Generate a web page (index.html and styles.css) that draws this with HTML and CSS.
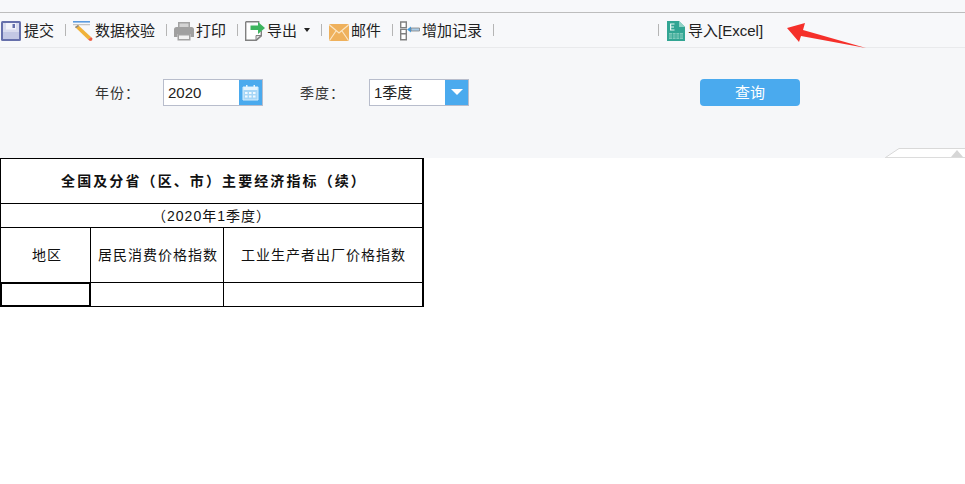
FILE: index.html
```html
<!DOCTYPE html>
<html lang="zh">
<head>
<meta charset="utf-8">
<title>主要经济指标</title>
<link rel="stylesheet" href="styles.css">
</head>
<body>
<div class="top-strip"></div>
<div class="toolbar">
  <div class="tool tool-first">
    <svg class="icon" viewBox="0 0 20 20"><rect x="0" y="0" width="20" height="20" rx="1.500" fill="#6670ab"/><path d="M2 2h16v16H2z" fill="#d9dcee"/><path d="M5 2h10v6.500H5z" fill="#f2f3fa"/><path d="M11.500 3h2.500v4h-2.500z" fill="#6670ab"/><path d="M2 11h16v7H2z" fill="#c3c8e4"/></svg>
    <span>提交</span>
  </div>
  <i class="sep"></i>
  <div class="tool">
    <svg class="icon" viewBox="0 0 20 20"><path d="M0 0h17v1.600H0z" fill="#5a9be0"/><path d="M0 3.200h17v1H0z" fill="#b5b5b5"/><path d="M2 6l3-2 13 12-3 2.500z" fill="#f0b23a"/><path d="M2 6l3-2 1 1-3 2.200z" fill="#8a8a8a"/><path d="M15 18.500l3-2.500 1.500 1.500-.5 2-2 .5z" fill="#ee5f45"/></svg>
    <span>数据校验</span>
  </div>
  <i class="sep"></i>
  <div class="tool">
    <svg class="icon" viewBox="0 0 20 20"><path d="M4 1h12v6H4z" fill="#a3a3a3"/><path d="M5.500 2.500h9V6h-9z" fill="#d4d4d4"/><path d="M0 8.500q0-2.500 2.500-2.500h15Q20 6 20 8.500V16h-3.500v-3h-13v3H0z" fill="#a0a0a0"/><path d="M3.500 13h13v6.500h-13z" fill="#a3a3a3"/><path d="M5 14.500h10v3.500H5z" fill="#f2f2f2"/></svg>
    <span>打印</span>
  </div>
  <i class="sep"></i>
  <div class="tool">
    <svg class="icon" viewBox="0 0 20 20"><path d="M.7.700h13v3M16.300 10v5l-5 4.300H.7V.7" fill="#fff" stroke="#808080" stroke-width="1.400"/><path d="M16 14.500h-5v4.500z" fill="#dedede" stroke="#808080"/><path d="M5.500 4.500h7.500V1L20 7l-7 6V9H5.500z" fill="#3db45e"/></svg>
    <span>导出</span>
    <svg class="caret" viewBox="0 0 6 4"><path d="M0 0h6L3 4z" fill="#222"/></svg>
  </div>
  <i class="sep"></i>
  <div class="tool">
    <svg class="icon" viewBox="0 0 20 20"><rect x="0" y="3" width="20" height="17" rx="1.500" fill="#efb15c"/><path d="M.5 4L10 12l9.500-8M.5 19.500L7 10M19.500 19.500L13 10" fill="none" stroke="#fbe6c5" stroke-width="1.200"/></svg>
    <span>邮件</span>
  </div>
  <i class="sep"></i>
  <div class="tool">
    <svg class="icon" viewBox="0 0 20 20"><path d="M.7 1h5.600v5.600H.7zM.7 8.400h5.600v4.400H.7zM.7 12.800h5.600v6H.7z" fill="#fff" stroke="#808080" stroke-width="1.400"/><path d="M7 8.500l4-3v6z" fill="#3f9be0"/><path d="M11 7h8.500v3H11z" fill="#a9cbe6" stroke="#808080" stroke-width=".8"/></svg>
    <span>增加记录</span>
  </div>
  <i class="sep"></i>
  <i class="sep sep-far"></i>
  <div class="tool">
    <svg class="icon" viewBox="0 0 20 20"><path d="M1 0h12l6 6v14H1z" fill="#32a593"/><path d="M13 0l6 6h-6z" fill="#8fd3c6"/><path d="M4 2.500h4.500v1H5.200v2H8v1H5.200v2h3.300v1H4z" fill="#e8f7f3"/><path d="M3 12h14v6H3z" fill="#7fcbbb"/><path d="M6.500 12v6M10 12v6M13.500 12v6M3 14h14M3 16h14" stroke="#32a593" stroke-width=".7"/></svg>
    <span>导入[Excel]</span>
  </div>
</div>
<form class="filter">
  <label class="field-label">年份：</label>
  <div class="combo">
    <span class="combo-value">2020</span>
    <span class="combo-btn">
      <svg class="cal" viewBox="0 0 17 17"><path d="M1 3h15v13H1z" fill="#a6d6f7" stroke="#d5edfc"/><path d="M1.500 3h14v3h-14z" fill="#e4f4fe"/><path d="M4 1h1.500v3H4zM11.500 1H13v3h-1.500z" fill="#e4f4fe"/><path d="M3 8h2.500v2H3zM7 8h2.500v2H7zM11 8h2.500v2H11zM3 11.500h2.500v2H3zM7 11.500h2.500v2H7zM11 11.500h2.500v2H11z" fill="#f1f9ff"/></svg>
    </span>
  </div>
  <label class="field-label field-label-second">季度：</label>
  <div class="combo">
    <span class="combo-value">1季度</span>
    <span class="combo-btn">
      <svg class="down" viewBox="0 0 12 6"><path d="M0 0h12L6 6z" fill="#fff"/></svg>
    </span>
  </div>
  <button type="button" class="query">查询</button>
  <svg class="collapse" viewBox="0 0 80 10"><path d="M0 9.500L14 .5h66v9z" fill="#fff"/><path d="M.5 9.500L14 .5h66" fill="none" stroke="#d9d9d9"/><path d="M0 9h80v1H0z" fill="#dcdcdc"/><path d="M66 9l6-7 6 7z" fill="#d6d6d6"/></svg>
</form>
<table class="report">
  <colgroup><col class="col-a"><col class="col-b"><col class="col-c"></colgroup>
  <tr class="row-title"><td colspan="3" class="title">全国及分省（区、市）主要经济指标（续）</td></tr>
  <tr class="row-sub"><td colspan="3">（2020年1季度）</td></tr>
  <tr class="row-head"><td class="head-first">地区</td><td class="head-mid">居民消费价格指数</td><td class="head-last">工业生产者出厂价格指数</td></tr>
  <tr class="row-data"><td class="selected"></td><td></td><td></td></tr>
</table>
<svg class="arrow" viewBox="0 0 85 30"><path d="M1 5L19 0l-2 7 63 18-65-12-2 6z" fill="#f5302a"/></svg>
</body>
</html>
```
FILE: styles.css
```css
html, body {
  margin: 0;
  padding: 0;
  background: #fff;
}
body {
  position: relative;
  width: 965px;
  height: 484px;
  overflow: hidden;
  font-family: "Liberation Sans", "Noto Sans CJK SC", sans-serif;
  font-size: 15px;
  color: #222;
}
.top-strip {
  height: 12px;
  background: #f7f8fa;
  border-bottom: 1px solid #bdbdbd;
}
.toolbar {
  height: 34px;
  display: flex;
  align-items: center;
  padding-left: 1px;
  background: #f7f8fa;
  border-bottom: 1px solid #e9eaec;
}
.tool {
  display: flex;
  align-items: center;
  gap: 2px;
  height: 20px;
  line-height: 20px;
  white-space: nowrap;
}
.tool-first {
  gap: 3px;
}
.tool span {
  display: block;
  margin-top: 2px;
}
.icon {
  width: 20px;
  height: 20px;
  flex: none;
  margin-top: 2px;
}
.caret {
  width: 6px;
  height: 4px;
  margin-left: 5px;
}
.sep {
  display: block;
  flex: none;
  width: 1px;
  height: 12px;
  margin: 0 7px 0 11px;
  background: #b5b5b5;
}
.sep-far {
  margin-left: 157px;
}
.filter {
  position: relative;
  display: flex;
  align-items: center;
  height: 110px;
  padding: 0 0 22px 95px;
  box-sizing: border-box;
  background: #f6f7f9;
}
.field-label {
  width: 68px;
  font-size: 14px;
  letter-spacing: 1px;
  color: #333;
}
.field-label-second {
  width: 69px;
  margin-left: 37px;
}
.combo {
  display: flex;
  align-items: stretch;
  width: 100px;
  height: 27px;
  box-sizing: border-box;
  border: 1px solid #b8bdcc;
  background: #fff;
}
.combo-value {
  flex: 1;
  padding-left: 4px;
  line-height: 25px;
  color: #222;
}
.combo-btn {
  display: flex;
  align-items: center;
  justify-content: center;
  width: 23px;
  background: #4aaaee;
}
.cal {
  width: 17px;
  height: 17px;
}
.down {
  width: 12px;
  height: 6px;
}
.query {
  width: 100px;
  height: 27px;
  margin-left: 231px;
  padding: 0;
  border: 0;
  border-radius: 4px;
  background: #4aaaee;
  color: #fff;
  font: inherit;
  line-height: 27px;
}
.collapse {
  position: absolute;
  right: 0;
  bottom: 0;
  width: 80px;
  height: 10px;
}
.report {
  table-layout: fixed;
  width: 422px;
  border-collapse: collapse;
  box-shadow: 1px 0 0 #000;
  font-size: 14px;
  color: #111;
  text-align: center;
  letter-spacing: 1px;
}
.report td {
  padding: 0 0 2px;
  border: 1px solid #000;
  box-sizing: border-box;
}
.col-a { width: 90px; }
.col-b { width: 133px; }
.col-c { width: 199px; }
.row-title { height: 45px; }
.row-sub { height: 24px; }
.row-head { height: 55px; }
.row-data { height: 24px; }
.report .title {
  padding-left: 5px;
  font-weight: 700;
  letter-spacing: 2.1px;
}
.report .head-first {
  padding: 0 0 3px 3px;
}
.report .head-mid {
  padding: 0 0 3px 2px;
}
.report .head-last {
  padding: 0 0 3px 1px;
}
.report td.selected {
  box-shadow: inset 0 0 0 1px #000;
}
.arrow {
  position: absolute;
  left: 786px;
  top: 23px;
  width: 85px;
  height: 30px;
}
```
